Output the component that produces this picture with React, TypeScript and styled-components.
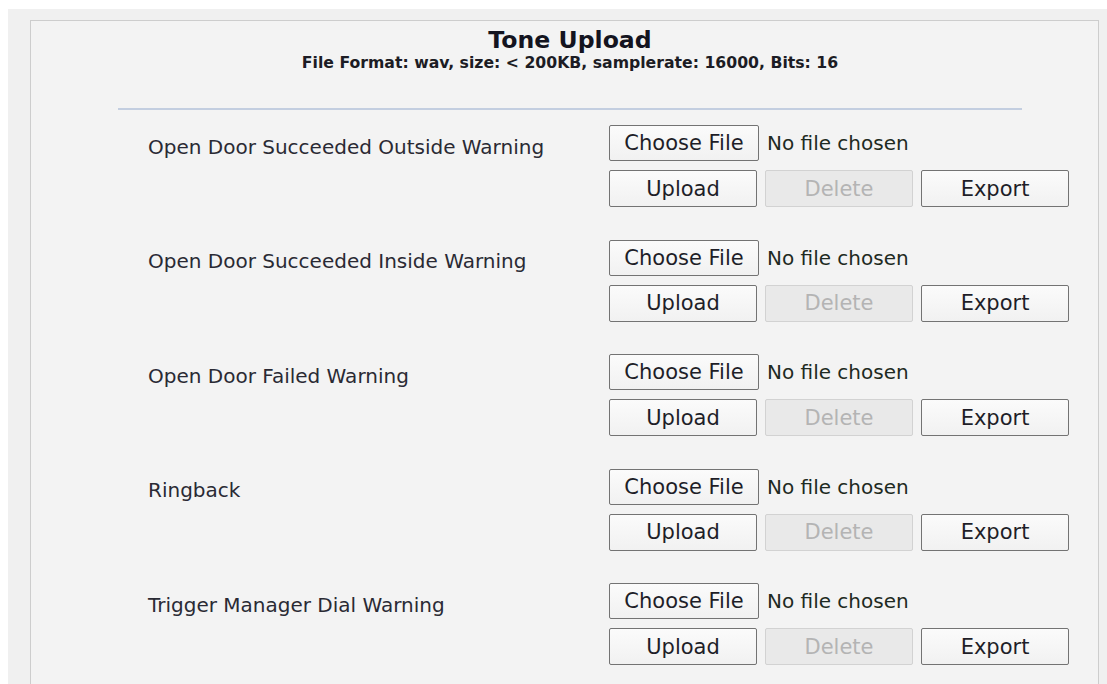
import * as React from "react";
import styled, { createGlobalStyle } from "styled-components";

const GlobalStyle = createGlobalStyle`
  html, body {
    margin: 0;
    padding: 0;
    background: #ffffff;
  }
  body {
    font-family: "DejaVu Sans", Verdana, sans-serif;
    color: #222;
  }
`;

const Page = styled.div`
  margin: 9px 0 0 8px;
  padding: 11px 8px 0 22px;
  background: #f0f0f0;
  min-height: 675px;
  box-sizing: border-box;
`;

const Panel = styled.div`
  border: 1px solid #cdcdcd;
  border-bottom: none;
  background: #f3f3f3;
  min-height: 664px;
  padding-left: 87px;
  box-sizing: border-box;
`;

const Content = styled.div`
  width: 904px;
`;

const Header = styled.div`
  text-align: center;
  padding-top: 6px;
  padding-bottom: 36px;
  border-bottom: 2px solid #c3cee0;
  margin-bottom: 15px;
`;

const Title = styled.h2`
  margin: 0;
  font-size: 23.6px;
  line-height: 27px;
  font-weight: bold;
  color: #141420;
`;

const Subtitle = styled.div`
  font-size: 15.7px;
  line-height: 18px;
  font-weight: bold;
  color: #1c1c24;
`;

const ToneRow = styled.div`
  display: grid;
  grid-template-columns: 491px auto;
  margin-bottom: 32.5px;
`;

const Label = styled.div`
  padding-left: 30px;
  height: 36px;
  display: flex;
  align-items: center;
  padding-top: 7px;
  box-sizing: border-box;
  font-size: 20px;
  color: #2a2a34;
  white-space: nowrap;
`;

const Controls = styled.div`
  display: flex;
  flex-direction: column;
  gap: 9px;
`;

const FileLine = styled.div`
  display: flex;
  align-items: center;
  gap: 8px;
  height: 36px;
`;

const ButtonLine = styled.div`
  display: flex;
  gap: 8px;
`;

const Btn = styled.button<{ $wide?: boolean }>`
  width: ${(p) => (p.$wide ? 150 : 148)}px;
  height: ${(p) => (p.$wide ? 36 : 37)}px;
  padding: 0;
  border: 1px solid #737373;
  border-radius: 2px;
  background: linear-gradient(#fbfbfb, #f1f1f1);
  font-family: "DejaVu Sans", Verdana, sans-serif;
  font-size: 21px;
  color: #1e1e28;
  cursor: pointer;

  &:disabled {
    border-color: #d2d2d2;
    background: #e9e9e9;
    color: #b4b4b4;
    cursor: default;
  }
`;

const FileStatus = styled.span`
  font-size: 20px;
  color: #1e2a22;
`;

const tones = [
  "Open Door Succeeded Outside Warning",
  "Open Door Succeeded Inside Warning",
  "Open Door Failed Warning",
  "Ringback",
  "Trigger Manager Dial Warning",
];

const ToneUpload = () => {
  return (
    <Page>
      <Panel>
        <Content>
          <Header>
            <Title>Tone Upload</Title>
            <Subtitle>File Format: wav, size: &lt; 200KB, samplerate: 16000, Bits: 16</Subtitle>
          </Header>
          {tones.map((name) => (
            <ToneRow key={name}>
              <Label>{name}</Label>
              <Controls>
                <FileLine>
                  <Btn $wide>Choose File</Btn>
                  <FileStatus>No file chosen</FileStatus>
                </FileLine>
                <ButtonLine>
                  <Btn>Upload</Btn>
                  <Btn disabled>Delete</Btn>
                  <Btn>Export</Btn>
                </ButtonLine>
              </Controls>
            </ToneRow>
          ))}
        </Content>
      </Panel>
    </Page>
  );
};

export default function App() {
  return (
    <>
      <GlobalStyle />
      <ToneUpload />
    </>
  );
}
